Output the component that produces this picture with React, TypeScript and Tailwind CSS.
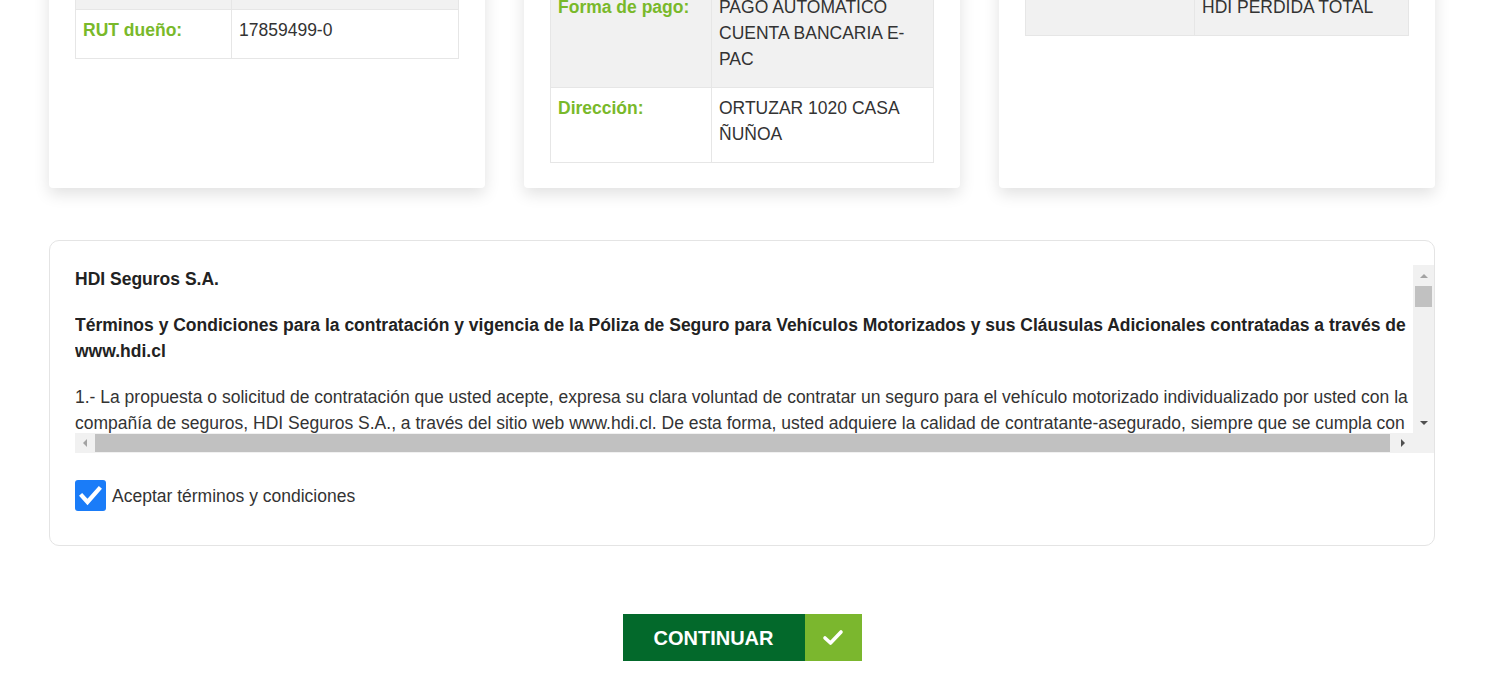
import React from 'react';

type Row = { label: string; lines: string[]; gray: boolean };

const CARDS: { labelW: string; rows: Row[] }[] = [
  {
    labelW: 'w-[156px]',
    rows: [
      { label: 'Dueño:', lines: ['JUAN PEREZ'], gray: true },
      { label: 'Patente:', lines: ['KLRT45'], gray: false },
      { label: 'Vehículo:', lines: ['CHEVROLET SAIL', '2019'], gray: true },
      { label: 'RUT dueño:', lines: ['17859499-0'], gray: false },
    ],
  },
  {
    labelW: 'w-[161px]',
    rows: [
      { label: 'Email:', lines: ['jperez@gmail.com'], gray: true },
      { label: 'Nombre:', lines: ['JUAN ANDRES', 'PEREZ', 'GONZALEZ'], gray: false },
      { label: 'Forma de pago:', lines: ['PAGO AUTOMATICO', 'CUENTA BANCARIA E-', 'PAC'], gray: true },
      { label: 'Dirección:', lines: ['ORTUZAR 1020 CASA', 'ÑUÑOA'], gray: false },
    ],
  },
  {
    labelW: 'w-[169px]',
    rows: [
      { label: 'Plan:', lines: ['HDI FULL'], gray: true },
      { label: 'Deducible:', lines: ['UF 5'], gray: false },
      { label: 'Coberturas:', lines: ['HDI DAÑOS PROPIOS', 'HDI ROBO', 'HDI PERDIDA TOTAL'], gray: true },
    ],
  },
];

function InfoTable({ rows, labelW }: { rows: Row[]; labelW: string }) {
  return (
    <table className="w-full border-collapse">
      <tbody>
        {rows.map((r) => (
          <tr key={r.label} className={r.gray ? 'bg-[#f1f1f1]' : 'bg-white'}>
            <td className={`${labelW} border border-[#e6e6e6] px-[7px] pt-[7px] pb-[15px] align-top font-bold text-[#79b92a] whitespace-nowrap`}>
              {r.label}
            </td>
            <td className="border border-[#e6e6e6] px-[7px] pt-[7px] pb-[15px] align-top">
              {r.lines.map((l) => (
                <div key={l} className="whitespace-nowrap">{l}</div>
              ))}
            </td>
          </tr>
        ))}
      </tbody>
    </table>
  );
}

function Tri({ dir, dark }: { dir: 'up' | 'down' | 'left' | 'right'; dark?: boolean }) {
  const pts = {
    up: '0,6 4,2 8,6',
    down: '0,2 8,2 4,6',
    left: '6,0 6,8 2,4',
    right: '2,0 2,8 6,4',
  }[dir];
  return (
    <svg width="8" height="8" viewBox="0 0 8 8">
      <polygon points={pts} fill={dark ? '#505050' : '#a3a3a3'} />
    </svg>
  );
}

export default function App() {
  return (
    <div className="h-[676px] overflow-hidden bg-white font-['Liberation_Sans',Arial,sans-serif] text-[17.5px] leading-[26px] text-[#333]">
      <div className="ml-[49px] w-[1386px]">
        {/* Summary cards (page is scrolled, tops are off screen) */}
        <div className="flex h-[188px] flex-col justify-end">
          <div className="flex gap-[39px]">
            {CARDS.map((c, i) => (
              <div key={i} className="w-[436px] rounded-[4px] bg-white px-[26px] pt-[26px] pb-[25px] shadow-[0_6px_16px_rgba(0,0,0,0.12)]">
                <InfoTable rows={c.rows} labelW={c.labelW} />
              </div>
            ))}
          </div>
        </div>

        {/* Terms and conditions */}
        <div className="mt-[52px] rounded-[10px] border border-[#e4e4e4] pt-[24px] pl-[25px] pb-[34px]">
          <div className="flex flex-col">
            <div className="flex">
              <div className="h-[168px] w-[1338px] overflow-hidden">
                <div className="w-[1341px] pt-[1px]">
                  <p className="font-bold text-[#222]">HDI Seguros S.A.</p>
                  <p className="mt-[20px] font-bold text-[#222]">
                    Términos y Condiciones para la contratación y vigencia de la Póliza de Seguro para Vehículos Motorizados y sus Cláusulas Adicionales contratadas a través de www.hdi.cl
                  </p>
                  <p className="mt-[20px]">
                    1.- La propuesta o solicitud de contratación que usted acepte, expresa su clara voluntad de contratar un seguro para el vehículo motorizado individualizado por usted con la compañía de seguros, HDI Seguros S.A., a través del sitio web www.hdi.cl. De esta forma, usted adquiere la calidad de contratante-asegurado, siempre que se cumpla con los requisitos y condiciones establecidos en la póliza respectiva.
                  </p>
                  <p className="mt-[20px]">
                    2.- La vigencia del seguro comenzará una vez aceptada la propuesta y realizada la inspección del vehículo, cuando corresponda.
                  </p>
                </div>
              </div>
              <div className="flex w-[21px] flex-col bg-[#f1f1f1]">
                <div className="flex h-[21px] items-center justify-center"><Tri dir="up" /></div>
                <div className="ml-[2px] h-[21px] w-[17px] bg-[#c1c1c1]" />
                <div className="flex-1" />
                <div className="flex h-[21px] items-center justify-center"><Tri dir="down" dark /></div>
              </div>
            </div>
            <div className="flex h-[20px]">
              <div className="flex w-[1338px] bg-[#f1f1f1]">
                <div className="flex w-[20px] items-center justify-center"><Tri dir="left" /></div>
                <div className="my-[1px] w-[1295px] bg-[#c1c1c1]" />
                <div className="flex-1" />
                <div className="flex w-[20px] items-center justify-center"><Tri dir="right" dark /></div>
              </div>
              <div className="w-[21px] bg-[#f1f1f1]" />
            </div>
          </div>

          <div className="mt-[27px] flex items-center gap-[6px]">
            <span className="flex h-[31px] w-[31px] shrink-0 items-center justify-center rounded-[3px] bg-[#1a7cf8]">
              <svg width="31" height="31" viewBox="0 0 31 31">
                <polyline points="7,16 12.5,22 24,9" fill="none" stroke="#fff" strokeWidth="4.2" strokeLinecap="square" />
              </svg>
            </span>
            <span>Aceptar términos y condiciones</span>
          </div>
        </div>

        {/* Continue button */}
        <div className="mt-[68px] flex justify-center">
          <button className="flex h-[47px]">
            <span className="flex w-[182px] items-center justify-center bg-[#03692b] text-[20px] font-bold text-white">
              CONTINUAR
            </span>
            <span className="flex w-[57px] items-center justify-center bg-[#7bb72e]">
              <svg width="22" height="18" viewBox="0 0 22 18">
                <polyline points="3,9 8.5,14 19,3" fill="none" stroke="#fff" strokeWidth="3.6" strokeLinecap="round" strokeLinejoin="round" />
              </svg>
            </span>
          </button>
        </div>
      </div>
    </div>
  );
}
